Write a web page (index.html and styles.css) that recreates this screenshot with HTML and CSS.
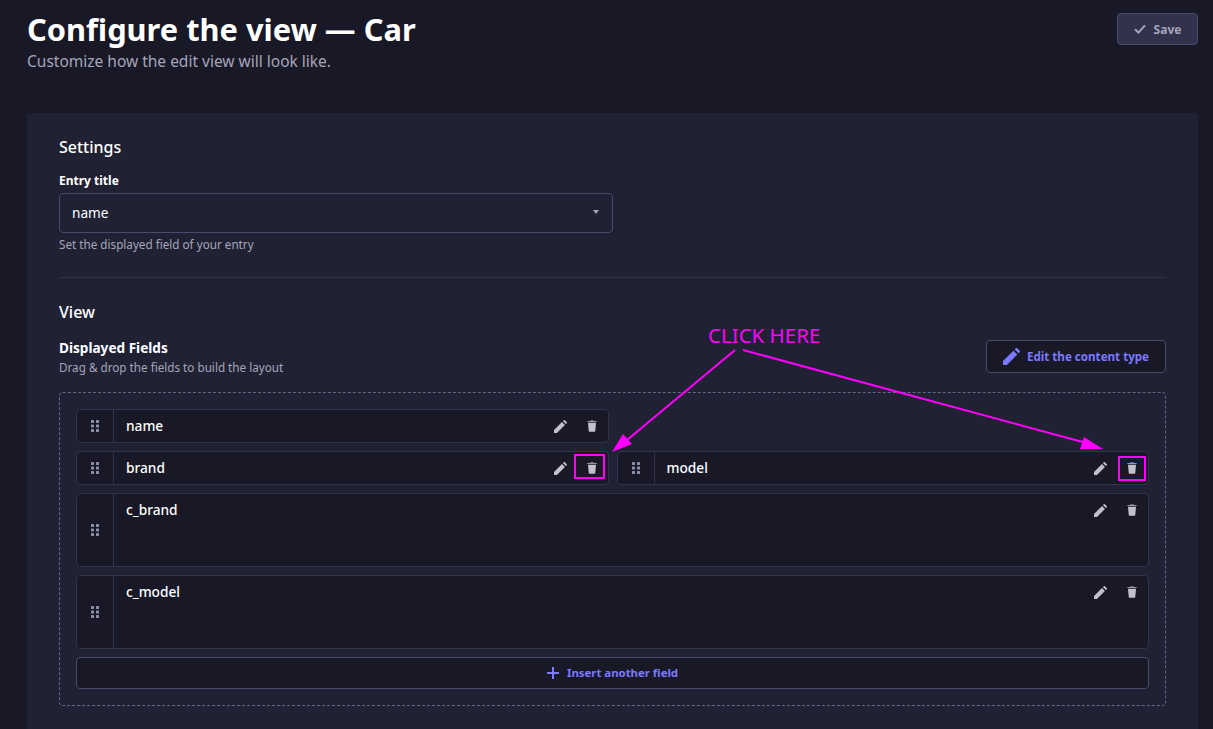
FILE: index.html
```html
<!DOCTYPE html>
<html lang="en">

<head>
  <meta charset="UTF-8">
  <meta name="viewport" content="width=device-width, initial-scale=1.0">
  <title>Configure the view — Car</title>
  <link rel="stylesheet" href="styles.css">
</head>

<body>
  <svg class="icon-defs" aria-hidden="true">
    <symbol id="i-pencil" viewBox="0 0 14 14">
      <path d="M0 14v-3.2L8.6 2.2l3.2 3.2L3.2 14z" />
      <path d="M9.6 1.2 10.6.2a.8.8 0 0 1 1.1 0l2.1 2.1a.8.8 0 0 1 0 1.1l-1 1z" />
    </symbol>
    <symbol id="i-trash" viewBox="0 0 12 14">
      <path d="M4 1V.4h4V1h3.6v1H.4V1z" />
      <path d="M1.2 3.2h9.6L9.9 13a1 1 0 0 1-1 1H3.1a1 1 0 0 1-1-1z" />
    </symbol>
    <symbol id="i-drag" viewBox="0 0 8 12">
      <rect x="0" y="0" width="3" height="3" rx=".6" />
      <rect x="5" y="0" width="3" height="3" rx=".6" />
      <rect x="0" y="4.5" width="3" height="3" rx=".6" />
      <rect x="5" y="4.5" width="3" height="3" rx=".6" />
      <rect x="0" y="9" width="3" height="3" rx=".6" />
      <rect x="5" y="9" width="3" height="3" rx=".6" />
    </symbol>
  </svg>

  <header class="page-head">
    <div>
      <h1>Configure the view — Car</h1>
      <p class="subtitle">Customize how the edit view will look like.</p>
    </div>
    <button class="btn-save" type="button">
      <svg class="icon-check" viewBox="0 0 12 10"><path d="M1 5.2 4.4 8.6 11 1.4" /></svg>
      Save
    </button>
  </header>

  <main class="card">
    <h2>Settings</h2>
    <label class="field-label">Entry title</label>
    <div class="select">
      <span>name</span>
      <span class="caret"></span>
    </div>
    <p class="hint">Set the displayed field of your entry</p>

    <hr class="divider">

    <h2>View</h2>
    <div class="view-head">
      <div>
        <h3>Displayed Fields</h3>
        <p class="hint">Drag &amp; drop the fields to build the layout</p>
      </div>
      <button class="btn-edit" type="button">
        <svg class="icon-btn"><use href="#i-pencil" /></svg>
        Edit the content type
      </button>
    </div>

    <div class="layout-box">
      <div class="layout-row">
        <div class="field">
          <div class="drag"><svg><use href="#i-drag" /></svg></div>
          <div class="field-name">name</div>
          <div class="actions">
            <svg class="i-pencil"><use href="#i-pencil" /></svg>
            <svg class="i-trash"><use href="#i-trash" /></svg>
          </div>
        </div>
        <div class="field-empty"></div>
      </div>
      <div class="layout-row">
        <div class="field">
          <div class="drag"><svg><use href="#i-drag" /></svg></div>
          <div class="field-name">brand</div>
          <div class="actions">
            <svg class="i-pencil"><use href="#i-pencil" /></svg>
            <svg class="i-trash"><use href="#i-trash" /></svg>
          </div>
        </div>
        <div class="field">
          <div class="drag"><svg><use href="#i-drag" /></svg></div>
          <div class="field-name">model</div>
          <div class="actions">
            <svg class="i-pencil"><use href="#i-pencil" /></svg>
            <svg class="i-trash"><use href="#i-trash" /></svg>
          </div>
        </div>
      </div>
      <div class="field field-tall">
        <div class="drag"><svg><use href="#i-drag" /></svg></div>
        <div class="field-name">c_brand</div>
        <div class="actions">
          <svg class="i-pencil"><use href="#i-pencil" /></svg>
          <svg class="i-trash"><use href="#i-trash" /></svg>
        </div>
      </div>
      <div class="field field-tall">
        <div class="drag"><svg><use href="#i-drag" /></svg></div>
        <div class="field-name">c_model</div>
        <div class="actions">
          <svg class="i-pencil"><use href="#i-pencil" /></svg>
          <svg class="i-trash"><use href="#i-trash" /></svg>
        </div>
      </div>
      <button class="btn-insert" type="button">
        <svg class="icon-plus" viewBox="0 0 12 12"><path d="M6 0v12M0 6h12" /></svg>
        Insert another field
      </button>
    </div>
  </main>

  <!-- annotation drawn over the screenshot -->
  <div class="note-text">CLICK HERE</div>
  <svg class="note" viewBox="0 0 1213 729">
    <g fill="none" stroke="#f0f" stroke-width="2">
      <path d="M735 350 627 440" />
      <path d="M743 350 1090 444" />
      <rect x="575" y="455" width="29" height="23" />
      <rect x="1119" y="457" width="26" height="23" />
    </g>
    <g fill="#f0f">
      <path d="M612 452 623 434 632 444z" />
      <path d="M1103 449 1084 437 1080 449z" />
    </g>
  </svg>
</body>

</html>
```

FILE: styles.css
```css
* {
  box-sizing: border-box;
  margin: 0;
  padding: 0;
}

html,
body {
  height: 100%;
  overflow: hidden;
}

body {
  position: relative;
  background: #181826;
  color: #fff;
  font-family: "Noto Sans", sans-serif;
  padding: 0 15px 0 27px;
}

button {
  font-family: inherit;
  cursor: pointer;
}

.icon-defs {
  position: absolute;
  width: 0;
  height: 0;
}

/* header */
.page-head {
  display: flex;
  justify-content: space-between;
  align-items: flex-start;
  height: 113px;
  padding-top: 12px;
}

h1 {
  font-size: 30.8px;
  line-height: 34px;
  font-weight: 700;
}

.subtitle {
  color: #a5a5ba;
  font-size: 15.5px;
  line-height: 24px;
  margin-top: 3px;
}

.btn-save {
  display: flex;
  align-items: center;
  justify-content: center;
  gap: 8px;
  width: 81px;
  height: 32px;
  margin-top: 1px;
  background: #32324d;
  border: 1px solid #4a4a6a;
  border-radius: 4px;
  color: #a5a5ba;
  font-size: 12px;
  font-weight: 700;
}

.icon-check {
  width: 12px;
  height: 10px;
  fill: none;
  stroke: #a5a5ba;
  stroke-width: 2;
}

/* card */
.card {
  background: #212134;
  border-radius: 4px;
  padding: 24px 32px 32px;
}

h2 {
  font-size: 16px;
  line-height: 20px;
  font-weight: 500;
}

.field-label {
  display: block;
  font-size: 12px;
  line-height: 16px;
  font-weight: 700;
  margin-top: 16px;
}

.select {
  display: flex;
  justify-content: space-between;
  align-items: center;
  width: 554px;
  height: 40px;
  margin-top: 4px;
  padding: 0 16px 2px 12px;
  background: #212134;
  border: 1px solid #4a4a6a;
  border-radius: 4px;
  font-size: 13.6px;
}

.caret {
  width: 0;
  height: 0;
  margin-right: -3px;
  border-left: 3px solid transparent;
  border-right: 3px solid transparent;
  border-top: 4px solid #a5a5ba;
}

.hint {
  color: #a5a5ba;
  font-size: 11.7px;
  line-height: 16px;
  margin-top: 3px;
}

.divider {
  border: 0;
  height: 1px;
  background: #32324d;
  margin: 25px 0 24px;
}

.view-head {
  display: flex;
  justify-content: space-between;
  align-items: center;
  margin-top: 16px;
}

h3 {
  font-size: 13.6px;
  line-height: 20px;
  font-weight: 700;
}

.view-head .hint {
  margin-top: 1px;
}

.btn-edit {
  display: flex;
  align-items: center;
  gap: 7px;
  width: 180px;
  height: 33px;
  margin-top: -1px;
  padding: 0 15px 0 16px;
  background: #181826;
  border: 1px solid #4a4a6a;
  border-radius: 4px;
  color: #7b79ff;
  font-size: 11.6px;
  font-weight: 700;
  white-space: nowrap;
}

.icon-btn {
  flex: none;
  width: 17px;
  height: 17px;
  fill: #7b79ff;
}

/* fields */
.layout-box {
  display: flex;
  flex-direction: column;
  gap: 8px;
  margin-top: 17px;
  padding: 16px;
  border: 1px dashed #666687;
  border-radius: 4px;
}

.layout-row {
  display: grid;
  grid-template-columns: 1fr 1fr;
  gap: 8px;
}

.field {
  display: flex;
  height: 34px;
  background: #181826;
  border: 1px solid #32324d;
  border-radius: 4px;
}

.field-tall {
  height: 74px;
}

.drag {
  display: flex;
  align-items: center;
  justify-content: center;
  flex: none;
  width: 37px;
  border-right: 1px solid #32324d;
}

.drag svg {
  width: 8px;
  height: 12px;
  fill: #8e8ea9;
}

.field-name {
  flex: 1;
  padding: 0 12px;
  font-size: 13.7px;
  line-height: 32px;
  font-weight: 500;
}

.actions {
  display: flex;
  align-items: center;
  gap: 20px;
  height: 32px;
  padding-right: 11px;
}

.i-pencil {
  width: 13px;
  height: 13px;
  fill: #c0c0cf;
}

.i-trash {
  width: 10px;
  height: 12px;
  fill: #c0c0cf;
}

.btn-insert {
  display: flex;
  align-items: center;
  justify-content: center;
  gap: 8px;
  height: 32px;
  padding-bottom: 2px;
  background: #181826;
  border: 1px solid #4a4a6a;
  border-radius: 4px;
  color: #7b79ff;
  font-size: 11.4px;
  font-weight: 700;
}

.icon-plus {
  width: 12px;
  height: 12px;
  margin-top: 2px;
  fill: none;
  stroke: #7b79ff;
  stroke-width: 2;
}

/* annotation */
.note {
  position: absolute;
  top: 0;
  left: 0;
  width: 1213px;
  height: 729px;
  pointer-events: none;
}

.note-text {
  position: absolute;
  top: 322px;
  left: 708px;
  color: #f0f;
  font-size: 20.5px;
  line-height: 26px;
}
```
